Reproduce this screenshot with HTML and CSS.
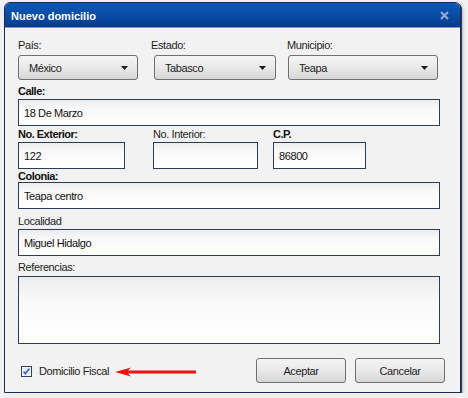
FILE: index.html
```html
<!doctype html>
<html>
<head>
    <title>Nuevo domicilio</title>
    <link rel="stylesheet" href="styles.css">
</head>
<body>
    <div class="window">
        <div class="title-bar">
            <span class="title">Nuevo domicilio</span>
            <svg class="close" width="9" height="9" viewBox="0 0 9 9">
                <path d="M1 1 L8 8 M8 1 L1 8" stroke="#93acd6" stroke-width="2"/>
            </svg>
        </div>
        <div class="content">
            <div class="combo-row">
                <div class="col col-pais">
                    <div class="label">País:</div>
                    <div class="combo combo-pais"><span>México</span><svg width="7" height="4" viewBox="0 0 7 4"><path d="M0 0 H7 L3.5 4 Z" fill="#1a1a1a"/></svg></div>
                </div>
                <div class="col col-estado">
                    <div class="label">Estado:</div>
                    <div class="combo combo-estado"><span>Tabasco</span><svg width="7" height="4" viewBox="0 0 7 4"><path d="M0 0 H7 L3.5 4 Z" fill="#1a1a1a"/></svg></div>
                </div>
                <div class="col col-municipio">
                    <div class="label">Municipio:</div>
                    <div class="combo combo-municipio"><span>Teapa</span><svg width="7" height="4" viewBox="0 0 7 4"><path d="M0 0 H7 L3.5 4 Z" fill="#1a1a1a"/></svg></div>
                </div>
            </div>

            <div class="group group-calle">
                <div class="label bold">Calle:</div>
                <input class="field" type="text" value="18 De Marzo">
            </div>

            <div class="group group-numeros">
                <div class="num-col num-ext">
                    <div class="label bold">No. Exterior:</div>
                    <input class="field" type="text" value="122">
                </div>
                <div class="num-col num-int">
                    <div class="label">No. Interior:</div>
                    <input class="field" type="text" value="">
                </div>
                <div class="num-col num-cp">
                    <div class="label bold">C.P.</div>
                    <input class="field" type="text" value="86800">
                </div>
            </div>

            <div class="group group-colonia">
                <div class="label bold">Colonia:</div>
                <input class="field" type="text" value="Teapa centro">
            </div>

            <div class="group group-localidad">
                <div class="label">Localidad</div>
                <input class="field" type="text" value="Miguel Hidalgo">
            </div>

            <div class="group group-referencias">
                <div class="label">Referencias:</div>
                <textarea class="field notes"></textarea>
            </div>

            <div class="footer">
                <div class="fiscal">
                    <span class="check">
                        <svg width="11" height="11" viewBox="0 0 11 11">
                            <rect x="0.5" y="0.5" width="10" height="10" fill="#f4f6fa" stroke="#34405e"/>
                            <rect x="2" y="2" width="7" height="7" fill="#e6ebf3"/>
                            <path d="M2.6 5.6 L4.4 7.6 L8.4 2.8" fill="none" stroke="#2a6bd1" stroke-width="1.6"/>
                        </svg>
                    </span>
                    <span class="fiscal-text">Domicilio Fiscal</span>
                    <svg class="arrow" width="82" height="10" viewBox="0 0 82 10">
                        <path d="M0 5 L16 0.5 L13 3.6 H81 V6.4 H13 L16 9.5 Z" fill="#ee1111"/>
                    </svg>
                </div>
                <div class="buttons">
                    <button class="btn">Aceptar</button>
                    <button class="btn">Cancelar</button>
                </div>
            </div>
        </div>
    </div>
</body>
</html>
```

FILE: styles.css
```css
body {
    margin: 0;
    padding: 0;
    background-color: #f0f0f0;
    font-family: "Liberation Sans", Arial, sans-serif;
    font-size: 11px;
    letter-spacing: -0.4px;
    color: #1e1e1e;
}
.window {
    box-sizing: border-box;
    width: 457px;
    height: 391px;
    margin: 2px 0 0 4px;
    border: 1px solid #1b2d55;
    border-radius: 6px 6px 0 0;
    background-color: #f2f2f2;
    box-shadow: 1px 1px 0 #2c3a5c, 2px 2px 3px rgba(0,0,0,0.25);
    overflow: hidden;
}
.title-bar {
    height: 23px;
    padding: 1px 11px 0 6px;
    display: flex;
    align-items: center;
    justify-content: space-between;
    background: linear-gradient(#0c58b9, #0a4ea9 45%, #053b8f);
    border-bottom: 1px solid #8d97a6;
}
.title {
    color: white;
    font-weight: bold;
    font-size: 11px;
    letter-spacing: 0;
}
.close {
    margin-top: -1px;
}
.content {
    padding: 11px 20px 0 13px;
}
.label {
    height: 13px;
    line-height: 13px;
    white-space: nowrap;
}
.bold {
    font-weight: bold;
    letter-spacing: -0.5px;
    color: #111;
}

/* combos */
.combo-row {
    display: flex;
}
.col .label {
    margin-bottom: 3px;
}
.col-pais {
    width: 120px;
}
.col-estado {
    width: 125px;
    margin-left: 13px;
}
.col-municipio {
    width: 151px;
    margin-left: 11px;
}
.combo {
    box-sizing: border-box;
    height: 25px;
    border: 1px solid #707070;
    border-radius: 3px;
    background: linear-gradient(#f4f4f4, #e9e9e9 50%, #d6d6d6);
    display: flex;
    align-items: center;
    justify-content: space-between;
    padding: 0 9px 0 10px;
}
.combo-pais {
    width: 120px;
}
.combo-estado {
    width: 122px;
    margin-left: 3px;
}
.combo-municipio {
    width: 150px;
    margin-left: 1px;
}

/* text fields */
.field {
    display: block;
    box-sizing: border-box;
    width: 422px;
    height: 27px;
    margin: 0;
    padding: 0 5px;
    border: 1px solid #2c3c5c;
    border-radius: 0;
    background: linear-gradient(#ececec, #f9f9f9 35%, #ffffff);
    font-family: "Liberation Sans", Arial, sans-serif;
    font-size: 11px;
    letter-spacing: -0.4px;
    color: #111;
    outline: none;
}
.group-calle {
    margin-top: 5px;
}
.group-calle .label {
    margin-bottom: 1px;
}
.group-numeros {
    display: flex;
    margin-top: 2px;
}
.num-col .label {
    margin-bottom: 1px;
}
.num-ext .field {
    width: 107px;
}
.num-int {
    margin-left: 28px;
}
.num-int .field {
    width: 105px;
}
.num-cp {
    margin-left: 15px;
}
.num-cp .field {
    width: 93px;
}
.group-colonia {
    margin-top: 1px;
}
.group-colonia .label {
    margin-bottom: -1px;
}
.group-localidad {
    margin-top: 6px;
}
.group-localidad .label {
    margin-bottom: 1px;
}
.group-referencias {
    margin-top: 5px;
}
.group-referencias .label {
    margin-bottom: 2px;
}
.notes {
    height: 68px;
    resize: none;
    padding: 3px 5px;
}

/* footer */
.footer {
    display: flex;
    align-items: center;
    justify-content: space-between;
    margin-top: 14px;
    margin-right: -5px;
}
.fiscal {
    display: flex;
    align-items: center;
    padding-top: 1px;
}
.check {
    display: flex;
    margin-left: 3px;
}
.fiscal-text {
    margin-left: 7px;
}
.arrow {
    margin-left: 6px;
    margin-top: 1px;
}
.buttons {
    display: flex;
    gap: 9px;
}
.btn {
    width: 90px;
    height: 25px;
    border: 1px solid #707070;
    border-radius: 3px;
    background: linear-gradient(#f4f4f4, #e9e9e9 50%, #d6d6d6);
    font-family: "Liberation Sans", Arial, sans-serif;
    font-size: 11px;
    letter-spacing: -0.4px;
    color: #1e1e1e;
    padding: 0;
}
```
